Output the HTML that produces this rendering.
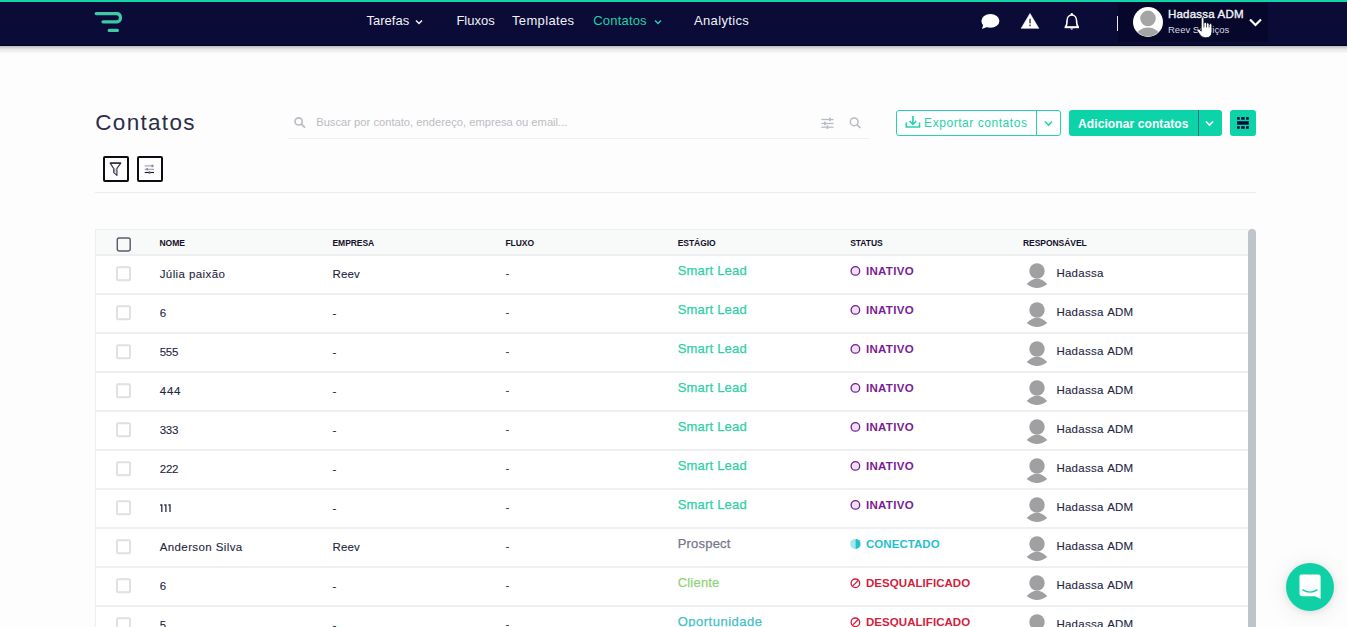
<!DOCTYPE html>
<html><head><meta charset="utf-8"><style>
html,body{margin:0;padding:0;width:1347px;height:627px;overflow:hidden;background:#fdfdfe;position:relative;font-family:"Liberation Sans",sans-serif}
.t{position:absolute;white-space:nowrap;line-height:1}
#nav{position:absolute;left:0;top:0;width:1347px;height:46px;background:#0a0b37;box-shadow:inset 0 -1px 0 #03031c}
#topbar{position:absolute;left:0;top:0;width:1347px;height:2px;background:#10d4a6}
#navshadow{position:absolute;left:0;top:46px;width:1347px;height:8px;background:linear-gradient(#bdbdc2,rgba(210,210,214,0.5) 40%,rgba(253,253,254,0))}
</style></head><body>
<div id="nav"></div><div id="topbar"></div><div id="navshadow"></div><svg style="position:absolute;left:90px;top:8px" width="40" height="30" viewBox="90 8 40 30">
<g stroke="#3fc7a6" stroke-width="3.2" stroke-linecap="round" fill="none">
<path d="M96.2 13.6 H117.5 A4.3 4.3 0 0 1 117.5 21.8 H103"/>
<path d="M109.2 30.4 H117.4"/>
</g></svg><div class="t" style="left:366.5px;top:13.60px;font-size:13px;color:#f2f2f7;font-weight:normal;letter-spacing:0px;">Tarefas</div>
<svg style="position:absolute;left:414px;top:18px" width="10" height="8" viewBox="0 0 10 8"><path d="M2 2.5 L5 5.5 L8 2.5" stroke="#f2f2f7" stroke-width="1.5" fill="none"/></svg><div class="t" style="left:456.4px;top:13.60px;font-size:13px;color:#f2f2f7;font-weight:normal;letter-spacing:0px;">Fluxos</div>
<div class="t" style="left:512px;top:13.60px;font-size:13px;color:#f2f2f7;font-weight:normal;letter-spacing:0.35px;">Templates</div>
<div class="t" style="left:593.2px;top:13.60px;font-size:13px;color:#1fd0a8;font-weight:normal;letter-spacing:0.2px;">Contatos</div>
<svg style="position:absolute;left:653px;top:18px" width="10" height="8" viewBox="0 0 10 8"><path d="M2 2.5 L5 5.5 L8 2.5" stroke="#1fd0a8" stroke-width="1.5" fill="none"/></svg><div class="t" style="left:694px;top:13.60px;font-size:13px;color:#f2f2f7;font-weight:normal;letter-spacing:0.35px;">Analytics</div>
<svg style="position:absolute;left:979px;top:11px" width="24" height="22" viewBox="979 11 24 22">
<ellipse cx="990.4" cy="20.9" rx="9" ry="6.9" fill="#fff"/>
<path d="M983.5 23.5 L982 29 L989.5 26" fill="#fff"/>
</svg><svg style="position:absolute;left:1019px;top:11px" width="22" height="20" viewBox="1019 11 22 20">
<path d="M1030 13.5 L1038.8 28.3 H1021.2 Z" fill="#fff" stroke="#fff" stroke-width="0.6" stroke-linejoin="round"/>
<rect x="1029.2" y="18.8" width="1.7" height="4.6" fill="#55556e"/>
<rect x="1029.2" y="24.6" width="1.7" height="1.6" fill="#55556e"/>
</svg><svg style="position:absolute;left:1062px;top:11px" width="20" height="21" viewBox="1062 11 20 21">
<path d="M1065.5 27 C1067 25.5 1067 24 1067 21 C1067 17.5 1069 15 1071.8 15 C1074.6 15 1076.6 17.5 1076.6 21 C1076.6 24 1076.6 25.5 1078.2 27 Z" fill="none" stroke="#fff" stroke-width="1.6" stroke-linejoin="round"/>
<path d="M1064.6 27.4 H1079" stroke="#fff" stroke-width="1.6"/>
<circle cx="1071.8" cy="14.2" r="1.2" fill="#fff"/>
<path d="M1069.9 28.5 Q1071.8 30.8 1073.7 28.5 Z" fill="#fff"/>
</svg><div style="position:absolute;left:1118px;top:3px;width:150px;height:39px;background:#06072b"></div><div style="position:absolute;left:1117px;top:16px;width:1.3px;height:15px;background:#e8e8ee"></div><svg style="position:absolute;left:1132px;top:6px" width="32" height="32" viewBox="0 0 32 32">
<defs><clipPath id="avc"><circle cx="16" cy="16" r="14.5"/></clipPath></defs>
<circle cx="16" cy="16" r="15" fill="#fff"/>
<g clip-path="url(#avc)"><circle cx="16" cy="12.4" r="7.8" fill="#a5a5a5"/>
<ellipse cx="16" cy="30" rx="11.5" ry="8.5" fill="#a5a5a5"/></g>
</svg><div class="t" style="left:1168px;top:8.97px;font-size:11.5px;color:#f4f4f8;font-weight:normal;letter-spacing:0.2px;-webkit-text-stroke:0.35px #f4f4f8;">Hadassa ADM</div>
<div class="t" style="left:1168px;top:24.76px;font-size:9.5px;color:#d8d8e0;font-weight:normal;letter-spacing:0px;">Reev Serviços</div>
<svg style="position:absolute;left:1247px;top:16px" width="17" height="12" viewBox="0 0 17 12"><path d="M3 3.5 L8.5 9 L14 3.5" stroke="#fff" stroke-width="2.2" fill="none"/></svg><div class="t" style="left:95.3px;top:111.55px;font-size:22.5px;color:#2b2e4a;font-weight:normal;letter-spacing:1.3px;">Contatos</div>
<svg style="position:absolute;left:292px;top:115px" width="16" height="15" viewBox="292 115 16 15">
<circle cx="298.6" cy="121.4" r="3.6" stroke="#bdbdc4" stroke-width="1.7" fill="none"/>
<path d="M301.3 124.1 L305 127.6" stroke="#bdbdc4" stroke-width="1.9"/></svg><div class="t" style="left:316.2px;top:116.82px;font-size:11.2px;color:#bcbcc2;font-weight:normal;letter-spacing:0px;">Buscar por contato, endereço, empresa ou email...</div>
<div style="position:absolute;left:288px;top:137.5px;width:581px;height:1.2px;background:#f0f0f2"></div><svg style="position:absolute;left:819px;top:115px" width="18" height="16" viewBox="819 115 18 16">
<g stroke="#b9bcc6" stroke-width="1.3">
<path d="M821.4 119.5 H833.5"/><path d="M821.4 123.5 H833.5"/><path d="M821.4 127.2 H833.5"/>
<path d="M830 117.8 V121.2" stroke-width="1.8"/><path d="M824.9 121.8 V125.2" stroke-width="1.8"/><path d="M827.4 125.5 V128.9" stroke-width="1.8"/>
</g></svg><svg style="position:absolute;left:847px;top:115px" width="16" height="16" viewBox="847 115 16 16">
<circle cx="854.2" cy="121.8" r="3.9" stroke="#b9bcc6" stroke-width="1.5" fill="none"/>
<path d="M857 124.6 L860.4 128" stroke="#b9bcc6" stroke-width="1.7"/></svg><div style="position:absolute;left:896px;top:110px;width:163px;height:23.8px;border:1px solid #24d3a8;border-radius:3px;background:#fff"></div><div style="position:absolute;left:1036px;top:111px;width:1px;height:24px;background:#24d3a8"></div><svg style="position:absolute;left:904px;top:114px" width="18" height="16" viewBox="904 114 18 16">
<g stroke="#24d3a8" stroke-width="1.6" fill="none">
<path d="M906.3 122.5 V127 H919.5 V122.5"/>
<path d="M912.9 116 V124"/><path d="M909.6 121 L912.9 124.3 L916.2 121"/>
</g></svg><div class="t" style="left:924.1px;top:116.84px;font-size:12px;color:#24d3a8;font-weight:normal;letter-spacing:0.55px;">Exportar contatos</div>
<svg style="position:absolute;left:1043px;top:119px" width="11" height="9" viewBox="0 0 11 9"><path d="M2 2.5 L5.5 6 L9 2.5" stroke="#24d3a8" stroke-width="1.6" fill="none"/></svg><div style="position:absolute;left:1069px;top:110px;width:152.5px;height:25.5px;border-radius:3px;background:#0dd4a8"></div><div style="position:absolute;left:1198px;top:110px;width:1px;height:25.5px;background:#127a7a"></div><div class="t" style="left:1078px;top:117.64px;font-size:12px;color:#ffffff;font-weight:bold;letter-spacing:0.1px;">Adicionar contatos</div>
<svg style="position:absolute;left:1204px;top:119px" width="11" height="9" viewBox="0 0 11 9"><path d="M2 2.5 L5.5 6 L9 2.5" stroke="#fff" stroke-width="1.7" fill="none"/></svg><div style="position:absolute;left:1230px;top:110px;width:26px;height:26px;border-radius:3px;background:#0dd4a8"></div>
<svg style="position:absolute;left:1230px;top:110px" width="26" height="26" viewBox="1230 110 26 26"><g fill="#0a0a35">
<rect x="1237.1" y="117.1" width="2.6" height="2.6"/><rect x="1241.2" y="117.1" width="3.5" height="2.6"/><rect x="1246.2" y="117.1" width="2.6" height="2.6"/>
<rect x="1237.1" y="121.2" width="11.7" height="3.5"/>
<rect x="1237.1" y="126.2" width="2.6" height="2.6"/><rect x="1241.2" y="126.2" width="3.5" height="2.6"/><rect x="1246.2" y="126.2" width="2.6" height="2.6"/>
</g></svg><div style="position:absolute;left:103px;top:156px;width:22px;height:22px;border:2px solid #0c0c14;border-radius:2px"></div><svg style="position:absolute;left:103px;top:156px" width="26" height="26" viewBox="103 156 26 26">
<path d="M110.2 163.1 H120.8 L116.9 168.4 V175.4 L113.6 172.4 V168.4 Z" fill="#fff" stroke="#3a3a55" stroke-width="1.2" stroke-linejoin="round"/>
<path d="M110 163.1 H121" stroke="#2a2a40" stroke-width="1.35"/>
<rect x="113.6" y="168.4" width="1.8" height="4.2" fill="#8a8aa2"/>
</svg><div style="position:absolute;left:137px;top:156px;width:22px;height:22px;border:2px solid #0c0c14;border-radius:2px"></div><svg style="position:absolute;left:137px;top:156px" width="26" height="26" viewBox="137 156 26 26">
<g stroke-width="1.1">
<path d="M144.7 165.9 H154" stroke="#9a9cae"/><path d="M144.7 169.3 H154" stroke="#9a9cae"/><path d="M144.7 172.5 H154" stroke="#1a1a2a"/>
<path d="M152.3 164.6 V167.2" stroke="#8a8ca0" stroke-width="1.6"/><path d="M147.2 168 V170.6" stroke="#8a8ca0" stroke-width="1.6"/><path d="M149.5 171.2 V173.8" stroke="#6a6a80" stroke-width="1.6"/>
</g></svg><div style="position:absolute;left:95px;top:192px;width:1161px;height:1px;background:#ececef"></div><div style="position:absolute;left:95px;top:229px;width:1153px;height:420px;border:1px solid #efeff1;border-right:none;background:#fff"></div><div style="position:absolute;left:96px;top:230px;width:1152px;height:24px;background:#f8f9f9"></div><div style="position:absolute;left:1248px;top:229px;width:7.5px;height:420px;border-radius:4px;background:#bfc3ca"></div><svg style="position:absolute;left:115px;top:236px" width="18" height="18" viewBox="0 0 18 18"><rect x="2.3" y="2.0" width="12.9" height="12.9" rx="1.8" fill="none" stroke="#5e5a6e" stroke-width="1.45"/></svg><div class="t" style="left:159.5px;top:239.00px;font-size:8.5px;color:#14102a;font-weight:bold;letter-spacing:-0.05px;">NOME</div>
<div class="t" style="left:332.5px;top:239.00px;font-size:8.5px;color:#14102a;font-weight:bold;letter-spacing:-0.05px;">EMPRESA</div>
<div class="t" style="left:505.4px;top:239.00px;font-size:8.5px;color:#14102a;font-weight:bold;letter-spacing:-0.05px;">FLUXO</div>
<div class="t" style="left:677.7px;top:239.00px;font-size:8.5px;color:#14102a;font-weight:bold;letter-spacing:-0.05px;">ESTÁGIO</div>
<div class="t" style="left:850.2px;top:239.00px;font-size:8.5px;color:#14102a;font-weight:bold;letter-spacing:-0.05px;">STATUS</div>
<div class="t" style="left:1023px;top:239.00px;font-size:8.5px;color:#14102a;font-weight:bold;letter-spacing:-0.05px;">RESPONSÁVEL</div>
<div style="position:absolute;left:96px;top:254px;width:1152px;height:2px;background:#efeff1"></div><svg style="position:absolute;left:115px;top:265px" width="18" height="18" viewBox="0 0 18 18"><rect x="2.0" y="2.2" width="13" height="13" rx="1" fill="none" stroke="#e0e0e3" stroke-width="1.9"/></svg><div class="t" style="left:159.7px;top:269.27px;font-size:11.5px;color:#232642;font-weight:normal;letter-spacing:0.4px;-webkit-text-stroke:0.1px #232642;">Júlia paixão</div>
<div class="t" style="left:332.5px;top:269.27px;font-size:11.5px;color:#232642;font-weight:normal;letter-spacing:0.1px;-webkit-text-stroke:0.1px #232642;">Reev</div>
<div class="t" style="left:505.4px;top:268.27px;font-size:11.5px;color:#2a2d45;font-weight:normal;letter-spacing:0px;">-</div>
<div class="t" style="left:677.7px;top:264.20px;font-size:13px;color:#2fd0a6;font-weight:normal;letter-spacing:0.2px;-webkit-text-stroke:0.25px #2fd0a6;">Smart Lead</div>
<svg style="position:absolute;left:849.4px;top:265.3px" width="13" height="12" viewBox="0 0 13 12"><circle cx="6.4" cy="5.9" r="4.3" fill="#ece2f1" stroke="#7a1d95" stroke-width="1.3"/></svg><div class="t" style="left:866px;top:266.37px;font-size:11.5px;color:#7a1d95;font-weight:bold;letter-spacing:0.3px;">INATIVO</div>
<svg style="position:absolute;left:1025px;top:262px" width="24" height="27" viewBox="0 0 24 27"><g fill="#a0a0a2">
<circle cx="12" cy="9" r="7.7"/><path d="M1.7 22 Q12 11.6 22.3 22 Q12 30 1.7 22 Z"/></g></svg><div class="t" style="left:1056.4px;top:267.57px;font-size:11.5px;color:#232642;font-weight:normal;letter-spacing:0.25px;word-spacing:0.8px;-webkit-text-stroke:0.1px #232642;">Hadassa</div>
<div style="position:absolute;left:96px;top:293px;width:1152px;height:2px;background:#efeff1"></div><svg style="position:absolute;left:115px;top:304px" width="18" height="18" viewBox="0 0 18 18"><rect x="2.0" y="2.2" width="13" height="13" rx="1" fill="none" stroke="#e0e0e3" stroke-width="1.9"/></svg><div class="t" style="left:159.7px;top:308.27px;font-size:11.5px;color:#232642;font-weight:normal;letter-spacing:0px;-webkit-text-stroke:0.1px #232642;">6</div>
<div class="t" style="left:332.5px;top:308.27px;font-size:11.5px;color:#232642;font-weight:normal;letter-spacing:0.1px;-webkit-text-stroke:0.1px #232642;">-</div>
<div class="t" style="left:505.4px;top:307.27px;font-size:11.5px;color:#2a2d45;font-weight:normal;letter-spacing:0px;">-</div>
<div class="t" style="left:677.7px;top:303.20px;font-size:13px;color:#2fd0a6;font-weight:normal;letter-spacing:0.2px;-webkit-text-stroke:0.25px #2fd0a6;">Smart Lead</div>
<svg style="position:absolute;left:849.4px;top:304.3px" width="13" height="12" viewBox="0 0 13 12"><circle cx="6.4" cy="5.9" r="4.3" fill="#ece2f1" stroke="#7a1d95" stroke-width="1.3"/></svg><div class="t" style="left:866px;top:305.37px;font-size:11.5px;color:#7a1d95;font-weight:bold;letter-spacing:0.3px;">INATIVO</div>
<svg style="position:absolute;left:1025px;top:301px" width="24" height="27" viewBox="0 0 24 27"><g fill="#a0a0a2">
<circle cx="12" cy="9" r="7.7"/><path d="M1.7 22 Q12 11.6 22.3 22 Q12 30 1.7 22 Z"/></g></svg><div class="t" style="left:1056.4px;top:306.57px;font-size:11.5px;color:#232642;font-weight:normal;letter-spacing:0.25px;word-spacing:0.8px;-webkit-text-stroke:0.1px #232642;">Hadassa ADM</div>
<div style="position:absolute;left:96px;top:332px;width:1152px;height:2px;background:#efeff1"></div><svg style="position:absolute;left:115px;top:343px" width="18" height="18" viewBox="0 0 18 18"><rect x="2.0" y="2.2" width="13" height="13" rx="1" fill="none" stroke="#e0e0e3" stroke-width="1.9"/></svg><div class="t" style="left:159.7px;top:347.27px;font-size:11.5px;color:#232642;font-weight:normal;letter-spacing:-0.3px;-webkit-text-stroke:0.1px #232642;">555</div>
<div class="t" style="left:332.5px;top:347.27px;font-size:11.5px;color:#232642;font-weight:normal;letter-spacing:0.1px;-webkit-text-stroke:0.1px #232642;">-</div>
<div class="t" style="left:505.4px;top:346.27px;font-size:11.5px;color:#2a2d45;font-weight:normal;letter-spacing:0px;">-</div>
<div class="t" style="left:677.7px;top:342.20px;font-size:13px;color:#2fd0a6;font-weight:normal;letter-spacing:0.2px;-webkit-text-stroke:0.25px #2fd0a6;">Smart Lead</div>
<svg style="position:absolute;left:849.4px;top:343.3px" width="13" height="12" viewBox="0 0 13 12"><circle cx="6.4" cy="5.9" r="4.3" fill="#ece2f1" stroke="#7a1d95" stroke-width="1.3"/></svg><div class="t" style="left:866px;top:344.37px;font-size:11.5px;color:#7a1d95;font-weight:bold;letter-spacing:0.3px;">INATIVO</div>
<svg style="position:absolute;left:1025px;top:340px" width="24" height="27" viewBox="0 0 24 27"><g fill="#a0a0a2">
<circle cx="12" cy="9" r="7.7"/><path d="M1.7 22 Q12 11.6 22.3 22 Q12 30 1.7 22 Z"/></g></svg><div class="t" style="left:1056.4px;top:345.57px;font-size:11.5px;color:#232642;font-weight:normal;letter-spacing:0.25px;word-spacing:0.8px;-webkit-text-stroke:0.1px #232642;">Hadassa ADM</div>
<div style="position:absolute;left:96px;top:371px;width:1152px;height:2px;background:#efeff1"></div><svg style="position:absolute;left:115px;top:382px" width="18" height="18" viewBox="0 0 18 18"><rect x="2.0" y="2.2" width="13" height="13" rx="1" fill="none" stroke="#e0e0e3" stroke-width="1.9"/></svg><div class="t" style="left:159.7px;top:386.27px;font-size:11.5px;color:#232642;font-weight:normal;letter-spacing:0.8px;-webkit-text-stroke:0.1px #232642;">444</div>
<div class="t" style="left:332.5px;top:386.27px;font-size:11.5px;color:#232642;font-weight:normal;letter-spacing:0.1px;-webkit-text-stroke:0.1px #232642;">-</div>
<div class="t" style="left:505.4px;top:385.27px;font-size:11.5px;color:#2a2d45;font-weight:normal;letter-spacing:0px;">-</div>
<div class="t" style="left:677.7px;top:381.20px;font-size:13px;color:#2fd0a6;font-weight:normal;letter-spacing:0.2px;-webkit-text-stroke:0.25px #2fd0a6;">Smart Lead</div>
<svg style="position:absolute;left:849.4px;top:382.3px" width="13" height="12" viewBox="0 0 13 12"><circle cx="6.4" cy="5.9" r="4.3" fill="#ece2f1" stroke="#7a1d95" stroke-width="1.3"/></svg><div class="t" style="left:866px;top:383.37px;font-size:11.5px;color:#7a1d95;font-weight:bold;letter-spacing:0.3px;">INATIVO</div>
<svg style="position:absolute;left:1025px;top:379px" width="24" height="27" viewBox="0 0 24 27"><g fill="#a0a0a2">
<circle cx="12" cy="9" r="7.7"/><path d="M1.7 22 Q12 11.6 22.3 22 Q12 30 1.7 22 Z"/></g></svg><div class="t" style="left:1056.4px;top:384.57px;font-size:11.5px;color:#232642;font-weight:normal;letter-spacing:0.25px;word-spacing:0.8px;-webkit-text-stroke:0.1px #232642;">Hadassa ADM</div>
<div style="position:absolute;left:96px;top:410px;width:1152px;height:2px;background:#efeff1"></div><svg style="position:absolute;left:115px;top:421px" width="18" height="18" viewBox="0 0 18 18"><rect x="2.0" y="2.2" width="13" height="13" rx="1" fill="none" stroke="#e0e0e3" stroke-width="1.9"/></svg><div class="t" style="left:159.7px;top:425.27px;font-size:11.5px;color:#232642;font-weight:normal;letter-spacing:-0.3px;-webkit-text-stroke:0.1px #232642;">333</div>
<div class="t" style="left:332.5px;top:425.27px;font-size:11.5px;color:#232642;font-weight:normal;letter-spacing:0.1px;-webkit-text-stroke:0.1px #232642;">-</div>
<div class="t" style="left:505.4px;top:424.27px;font-size:11.5px;color:#2a2d45;font-weight:normal;letter-spacing:0px;">-</div>
<div class="t" style="left:677.7px;top:420.20px;font-size:13px;color:#2fd0a6;font-weight:normal;letter-spacing:0.2px;-webkit-text-stroke:0.25px #2fd0a6;">Smart Lead</div>
<svg style="position:absolute;left:849.4px;top:421.3px" width="13" height="12" viewBox="0 0 13 12"><circle cx="6.4" cy="5.9" r="4.3" fill="#ece2f1" stroke="#7a1d95" stroke-width="1.3"/></svg><div class="t" style="left:866px;top:422.37px;font-size:11.5px;color:#7a1d95;font-weight:bold;letter-spacing:0.3px;">INATIVO</div>
<svg style="position:absolute;left:1025px;top:418px" width="24" height="27" viewBox="0 0 24 27"><g fill="#a0a0a2">
<circle cx="12" cy="9" r="7.7"/><path d="M1.7 22 Q12 11.6 22.3 22 Q12 30 1.7 22 Z"/></g></svg><div class="t" style="left:1056.4px;top:423.57px;font-size:11.5px;color:#232642;font-weight:normal;letter-spacing:0.25px;word-spacing:0.8px;-webkit-text-stroke:0.1px #232642;">Hadassa ADM</div>
<div style="position:absolute;left:96px;top:449px;width:1152px;height:2px;background:#efeff1"></div><svg style="position:absolute;left:115px;top:460px" width="18" height="18" viewBox="0 0 18 18"><rect x="2.0" y="2.2" width="13" height="13" rx="1" fill="none" stroke="#e0e0e3" stroke-width="1.9"/></svg><div class="t" style="left:159.7px;top:464.27px;font-size:11.5px;color:#232642;font-weight:normal;letter-spacing:-0.2px;-webkit-text-stroke:0.1px #232642;">222</div>
<div class="t" style="left:332.5px;top:464.27px;font-size:11.5px;color:#232642;font-weight:normal;letter-spacing:0.1px;-webkit-text-stroke:0.1px #232642;">-</div>
<div class="t" style="left:505.4px;top:463.27px;font-size:11.5px;color:#2a2d45;font-weight:normal;letter-spacing:0px;">-</div>
<div class="t" style="left:677.7px;top:459.20px;font-size:13px;color:#2fd0a6;font-weight:normal;letter-spacing:0.2px;-webkit-text-stroke:0.25px #2fd0a6;">Smart Lead</div>
<svg style="position:absolute;left:849.4px;top:460.3px" width="13" height="12" viewBox="0 0 13 12"><circle cx="6.4" cy="5.9" r="4.3" fill="#ece2f1" stroke="#7a1d95" stroke-width="1.3"/></svg><div class="t" style="left:866px;top:461.37px;font-size:11.5px;color:#7a1d95;font-weight:bold;letter-spacing:0.3px;">INATIVO</div>
<svg style="position:absolute;left:1025px;top:457px" width="24" height="27" viewBox="0 0 24 27"><g fill="#a0a0a2">
<circle cx="12" cy="9" r="7.7"/><path d="M1.7 22 Q12 11.6 22.3 22 Q12 30 1.7 22 Z"/></g></svg><div class="t" style="left:1056.4px;top:462.57px;font-size:11.5px;color:#232642;font-weight:normal;letter-spacing:0.25px;word-spacing:0.8px;-webkit-text-stroke:0.1px #232642;">Hadassa ADM</div>
<div style="position:absolute;left:96px;top:488px;width:1152px;height:2px;background:#efeff1"></div><svg style="position:absolute;left:115px;top:499px" width="18" height="18" viewBox="0 0 18 18"><rect x="2.0" y="2.2" width="13" height="13" rx="1" fill="none" stroke="#e0e0e3" stroke-width="1.9"/></svg><svg style="position:absolute;left:158px;top:503px" width="16" height="12" viewBox="158 503 16 12"><g stroke="#2a2d45" stroke-width="1.3" fill="none"><path d="M160.20000000000002 505 H161.8 V512"/><path d="M164.3 505 H165.9 V512"/><path d="M168.4 505 H170.0 V512"/></g></svg><div class="t" style="left:332.5px;top:503.27px;font-size:11.5px;color:#232642;font-weight:normal;letter-spacing:0.1px;-webkit-text-stroke:0.1px #232642;">-</div>
<div class="t" style="left:505.4px;top:502.27px;font-size:11.5px;color:#2a2d45;font-weight:normal;letter-spacing:0px;">-</div>
<div class="t" style="left:677.7px;top:498.20px;font-size:13px;color:#2fd0a6;font-weight:normal;letter-spacing:0.2px;-webkit-text-stroke:0.25px #2fd0a6;">Smart Lead</div>
<svg style="position:absolute;left:849.4px;top:499.3px" width="13" height="12" viewBox="0 0 13 12"><circle cx="6.4" cy="5.9" r="4.3" fill="#ece2f1" stroke="#7a1d95" stroke-width="1.3"/></svg><div class="t" style="left:866px;top:500.37px;font-size:11.5px;color:#7a1d95;font-weight:bold;letter-spacing:0.3px;">INATIVO</div>
<svg style="position:absolute;left:1025px;top:496px" width="24" height="27" viewBox="0 0 24 27"><g fill="#a0a0a2">
<circle cx="12" cy="9" r="7.7"/><path d="M1.7 22 Q12 11.6 22.3 22 Q12 30 1.7 22 Z"/></g></svg><div class="t" style="left:1056.4px;top:501.57px;font-size:11.5px;color:#232642;font-weight:normal;letter-spacing:0.25px;word-spacing:0.8px;-webkit-text-stroke:0.1px #232642;">Hadassa ADM</div>
<div style="position:absolute;left:96px;top:527px;width:1152px;height:2px;background:#efeff1"></div><svg style="position:absolute;left:115px;top:538px" width="18" height="18" viewBox="0 0 18 18"><rect x="2.0" y="2.2" width="13" height="13" rx="1" fill="none" stroke="#e0e0e3" stroke-width="1.9"/></svg><div class="t" style="left:159.7px;top:542.27px;font-size:11.5px;color:#232642;font-weight:normal;letter-spacing:0.4px;-webkit-text-stroke:0.1px #232642;">Anderson Silva</div>
<div class="t" style="left:332.5px;top:542.27px;font-size:11.5px;color:#232642;font-weight:normal;letter-spacing:0.1px;-webkit-text-stroke:0.1px #232642;">Reev</div>
<div class="t" style="left:505.4px;top:541.27px;font-size:11.5px;color:#2a2d45;font-weight:normal;letter-spacing:0px;">-</div>
<div class="t" style="left:677.7px;top:537.20px;font-size:13px;color:#76768a;font-weight:normal;letter-spacing:0.2px;-webkit-text-stroke:0.25px #76768a;">Prospect</div>
<svg style="position:absolute;left:849.4px;top:538.3px" width="13" height="12" viewBox="0 0 13 12"><circle cx="6.2" cy="5.9" r="5" fill="#a6e6ea"/><path d="M6.6 0.9 A5 5 0 0 1 6.6 10.9 Z" fill="#27bfd0"/></svg><div class="t" style="left:866px;top:539.37px;font-size:11.5px;color:#27bfd0;font-weight:bold;letter-spacing:0.05px;">CONECTADO</div>
<svg style="position:absolute;left:1025px;top:535px" width="24" height="27" viewBox="0 0 24 27"><g fill="#a0a0a2">
<circle cx="12" cy="9" r="7.7"/><path d="M1.7 22 Q12 11.6 22.3 22 Q12 30 1.7 22 Z"/></g></svg><div class="t" style="left:1056.4px;top:540.57px;font-size:11.5px;color:#232642;font-weight:normal;letter-spacing:0.25px;word-spacing:0.8px;-webkit-text-stroke:0.1px #232642;">Hadassa ADM</div>
<div style="position:absolute;left:96px;top:566px;width:1152px;height:2px;background:#efeff1"></div><svg style="position:absolute;left:115px;top:577px" width="18" height="18" viewBox="0 0 18 18"><rect x="2.0" y="2.2" width="13" height="13" rx="1" fill="none" stroke="#e0e0e3" stroke-width="1.9"/></svg><div class="t" style="left:159.7px;top:581.27px;font-size:11.5px;color:#232642;font-weight:normal;letter-spacing:0px;-webkit-text-stroke:0.1px #232642;">6</div>
<div class="t" style="left:332.5px;top:581.27px;font-size:11.5px;color:#232642;font-weight:normal;letter-spacing:0.1px;-webkit-text-stroke:0.1px #232642;">-</div>
<div class="t" style="left:505.4px;top:580.27px;font-size:11.5px;color:#2a2d45;font-weight:normal;letter-spacing:0px;">-</div>
<div class="t" style="left:677.7px;top:576.20px;font-size:13px;color:#8fd37a;font-weight:normal;letter-spacing:0.2px;-webkit-text-stroke:0.25px #8fd37a;">Cliente</div>
<svg style="position:absolute;left:849.4px;top:577.3px" width="13" height="12" viewBox="0 0 13 12"><circle cx="6.4" cy="6.3" r="4.3" fill="none" stroke="#d11f3c" stroke-width="1.3"/><path d="M3.6 9.1 L9.2 3.5" stroke="#d11f3c" stroke-width="1.3"/></svg><div class="t" style="left:866px;top:578.37px;font-size:11.5px;color:#d11f3c;font-weight:bold;letter-spacing:0.05px;">DESQUALIFICADO</div>
<svg style="position:absolute;left:1025px;top:574px" width="24" height="27" viewBox="0 0 24 27"><g fill="#a0a0a2">
<circle cx="12" cy="9" r="7.7"/><path d="M1.7 22 Q12 11.6 22.3 22 Q12 30 1.7 22 Z"/></g></svg><div class="t" style="left:1056.4px;top:579.57px;font-size:11.5px;color:#232642;font-weight:normal;letter-spacing:0.25px;word-spacing:0.8px;-webkit-text-stroke:0.1px #232642;">Hadassa ADM</div>
<div style="position:absolute;left:96px;top:605px;width:1152px;height:2px;background:#efeff1"></div><svg style="position:absolute;left:115px;top:616px" width="18" height="18" viewBox="0 0 18 18"><rect x="2.0" y="2.2" width="13" height="13" rx="1" fill="none" stroke="#e0e0e3" stroke-width="1.9"/></svg><div class="t" style="left:159.7px;top:620.27px;font-size:11.5px;color:#232642;font-weight:normal;letter-spacing:0px;-webkit-text-stroke:0.1px #232642;">5</div>
<div class="t" style="left:332.5px;top:620.27px;font-size:11.5px;color:#232642;font-weight:normal;letter-spacing:0.1px;-webkit-text-stroke:0.1px #232642;">-</div>
<div class="t" style="left:505.4px;top:619.27px;font-size:11.5px;color:#2a2d45;font-weight:normal;letter-spacing:0px;">-</div>
<div class="t" style="left:677.7px;top:615.20px;font-size:13px;color:#45c0c8;font-weight:normal;letter-spacing:0.5px;-webkit-text-stroke:0.25px #45c0c8;">Oportunidade</div>
<svg style="position:absolute;left:849.4px;top:616.3px" width="13" height="12" viewBox="0 0 13 12"><circle cx="6.4" cy="6.3" r="4.3" fill="none" stroke="#d11f3c" stroke-width="1.3"/><path d="M3.6 9.1 L9.2 3.5" stroke="#d11f3c" stroke-width="1.3"/></svg><div class="t" style="left:866px;top:617.37px;font-size:11.5px;color:#d11f3c;font-weight:bold;letter-spacing:0.05px;">DESQUALIFICADO</div>
<svg style="position:absolute;left:1025px;top:613px" width="24" height="27" viewBox="0 0 24 27"><g fill="#a0a0a2">
<circle cx="12" cy="9" r="7.7"/><path d="M1.7 22 Q12 11.6 22.3 22 Q12 30 1.7 22 Z"/></g></svg><div class="t" style="left:1056.4px;top:618.57px;font-size:11.5px;color:#232642;font-weight:normal;letter-spacing:0.25px;word-spacing:0.8px;-webkit-text-stroke:0.1px #232642;">Hadassa ADM</div>
<svg style="position:absolute;left:1190px;top:8px" width="30" height="35" viewBox="1190 8 30 35">
<path d="M1201.2 31 V18.4 Q1202.5 15.8 1203.9 18.4 V23.2 Q1205.1 21.2 1206.5 23.2 V23.8 Q1207.7 21.8 1209.1 23.8 V24.6 Q1210.5 22.6 1211.9 24.6 V31.5 Q1211.9 37.8 1205.6 37.8 Q1201.6 37.8 1199.6 34.2 L1196.6 30 Q1197.4 27.8 1199.6 29.6 L1201.2 31.2 Z" fill="#fff" stroke="#05051a" stroke-width="0.8" stroke-linejoin="round"/>
<path d="M1203.9 23.2 V27.5 M1206.5 23.8 V27.5 M1209.1 24.6 V27.5" stroke="#05051a" stroke-width="0.7"/>
</svg><div style="position:absolute;left:1286px;top:563px;width:48px;height:48px;border-radius:50%;background:#0fd1a5;box-shadow:0 1px 6px rgba(0,0,0,0.10),0 2px 24px rgba(0,0,0,0.08)"></div><svg style="position:absolute;left:1286px;top:563px" width="48" height="48" viewBox="1286 563 48 48">
<path d="M1302 574.6 H1318.5 A2.1 2.1 0 0 1 1320.6 576.7 V598.9 L1315.2 596.2 H1301.6 A2.1 2.1 0 0 1 1299.5 594.1 V576.7 A2.1 2.1 0 0 1 1302 574.6 Z" fill="#fff"/>
<path d="M1302.5 589.6 Q1310 594.6 1317.5 589.6" stroke="#0fd1a5" stroke-width="1.3" fill="none"/>
</svg>
</body></html>
